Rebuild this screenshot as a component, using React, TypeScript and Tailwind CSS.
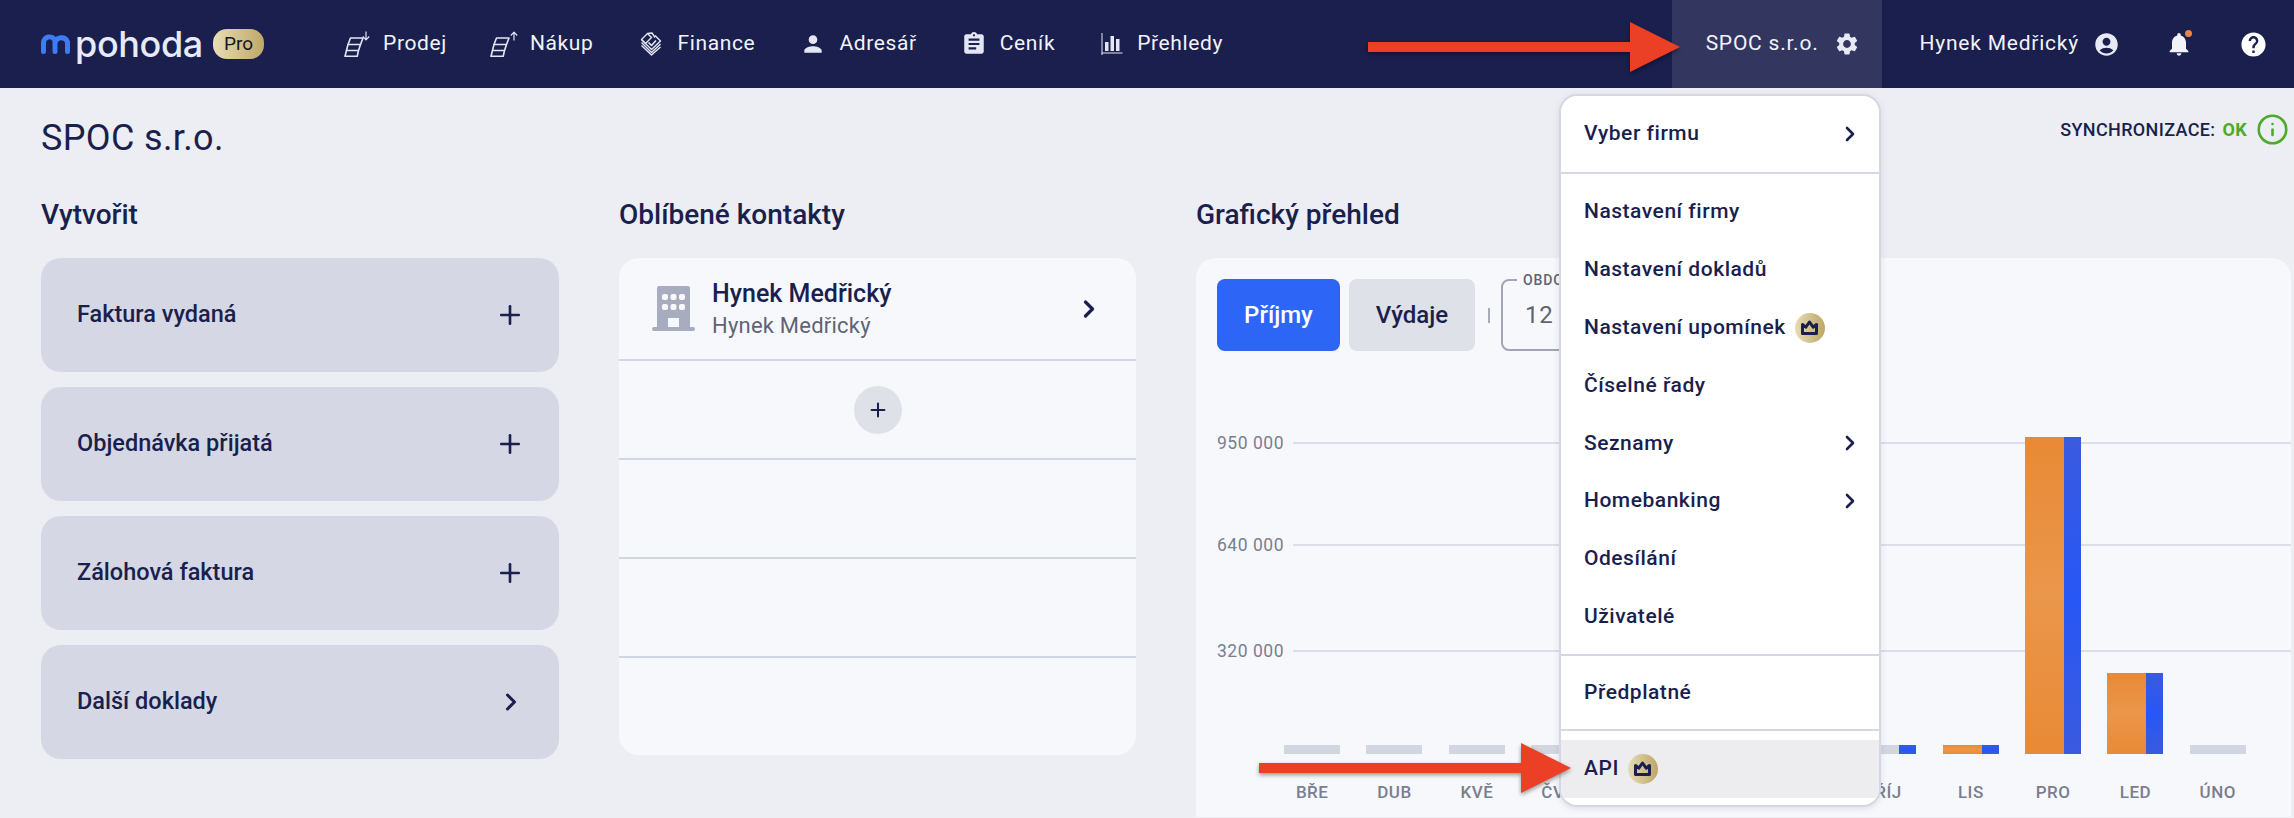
import { ChevronRight, Info, Plus } from "lucide-react";
import {
  MdAccountCircle,
  MdAssignment,
  MdHelp,
  MdNotifications,
  MdPerson,
  MdSettings,
} from "react-icons/md";

const StackIcon = ({ up }: { up?: boolean }) => (
  <svg width="28" height="26" viewBox="0 0 28 26" fill="none" stroke="#e4e7f3" strokeWidth="1.6" strokeLinejoin="round">
    <path d="M6.5 7h12.5L16.5 13.5H4z" />
    <path d="M4 13.5 2.5 19.5h12L16.5 13.5" />
    <path d="M2.5 19.5 1 25.3h12.2L14.5 19.5" />
    {up ? (
      <path d="M24 9.5V1.5M20.8 4.5 24 1.2l3.2 3.3" strokeWidth="1.2" />
    ) : (
      <path d="M22 .5v8M18.8 5.5 22 8.8l3.2-3.3" strokeWidth="1.2" />
    )}
  </svg>
);

const FinanceIcon = () => (
  <svg width="22" height="24" viewBox="0 0 22 24" fill="none" stroke="#e4e7f3" strokeWidth="1.4" strokeLinejoin="round">
    <path d="M7.5 1.5 1.5 7.5l4 4 6-6z" />
    <path d="M7.5 1.5 12 1l3 4.5" />
    <path d="M1.5 10.5 11.5 20.5 20.5 12" />
    <path d="M1.5 13.5 11.5 23 20.5 15" />
    <path d="M1.5 7.5 11.5 17.5 20.5 9 15 3.5" />
    <path d="M8.5 10.5 11.5 13.5 16 8.5" strokeWidth="1.7" />
  </svg>
);

const ChartIcon = () => (
  <svg width="22" height="22" viewBox="0 0 22 22" fill="#e4e7f3">
    <rect x="0.5" y="0" width="1" height="22" />
    <rect x="0.5" y="19.5" width="21" height="1" />
    <rect x="4" y="9" width="3.5" height="9" />
    <rect x="9.5" y="3" width="3.5" height="15" />
    <rect x="15" y="6" width="3.5" height="12" />
  </svg>
);

const Crown = () => (
  <span className="flex size-[30px] items-center justify-center rounded-full bg-gradient-to-r from-[#e6dcb4] to-[#bda766]">
    <svg width="19" height="17" viewBox="0 0 19 17" fill="none" stroke="#1a1f4e" strokeWidth="3" strokeLinejoin="round">
      <path d="M2.5 5.5 5.8 8.2 9.5 3l3.7 5.2 3.3-2.7V14.5h-14z" />
    </svg>
  </span>
);

const Building = () => (
  <svg width="43" height="45" viewBox="0 0 43 45" fill="#a7adbe">
    <rect x="5" y="0" width="33" height="44" rx="2" />
    <rect x="0" y="41" width="43" height="4" rx="2" />
    <g fill="#f7f8fc">
      <rect x="10" y="8" width="6" height="6" rx="2" />
      <rect x="18.5" y="8" width="6" height="6" rx="2" />
      <rect x="27" y="8" width="6" height="6" rx="2" />
      <rect x="10" y="18" width="6" height="6" rx="2" />
      <rect x="18.5" y="18" width="6" height="6" rx="2" />
      <rect x="27" y="18" width="6" height="6" rx="2" />
      <rect x="16" y="32" width="11" height="9" />
    </g>
  </svg>
);

const Arrow = ({ className, length }: { className: string; length: number }) => (
  <svg
    className={`absolute drop-shadow-[0_2px_2px_rgba(0,0,0,0.4)] ${className}`}
    width={length}
    height="50"
    viewBox={`0 0 ${length} 50`}
    fill="#ec4026"
  >
    <path d={`M0 20h${length - 50}V0l50 25-50 25V30H0z`} />
  </svg>
);

const navItems = [
  { label: "Prodej", icon: <StackIcon />, cls: "gap-[11px]" },
  { label: "Nákup", icon: <StackIcon up />, cls: "ml-[43px] gap-[12px]" },
  { label: "Finance", icon: <FinanceIcon />, cls: "ml-[46px] gap-[16px]" },
  { label: "Adresář", icon: <MdPerson className="size-[26px] text-[#e4e7f3]" />, cls: "ml-[45px] gap-[13px]" },
  { label: "Ceník", icon: <MdAssignment className="size-[26px] text-[#e4e7f3]" />, cls: "ml-[44px] gap-[13px]" },
  { label: "Přehledy", icon: <ChartIcon />, cls: "ml-[46px] gap-[14px]" },
];

const Header = () => (
  <header className="flex h-[88px] items-center bg-[#1a1f4e] pl-[41px] text-[21px] tracking-[0.03em] text-[#f2f3f9]">
    <div className="flex w-[303px] items-center">
      <svg width="31" height="20" viewBox="0 0 31 20" fill="none" stroke="#3b7cf8" strokeWidth="5" strokeLinecap="round">
        <path d="M2.5 17.5V9a6 6 0 0 1 11.5-2.5v11M14 9a6.5 6.5 0 0 1 12.5-1v9.5" />
      </svg>
      <span className="ml-[3px] font-[Inter,sans-serif] text-[36px] leading-none font-medium tracking-[-0.01em] text-[#e6ebfa]">
        pohoda
      </span>
      <span className="ml-[10px] flex h-[30px] w-[51px] items-center justify-center rounded-[14px] bg-gradient-to-r from-[#e8deb4] to-[#bfa866] text-[19px] tracking-normal text-[#15162a]">
        Pro
      </span>
    </div>
    <nav className="flex items-center">
      {navItems.map((item) => (
        <div key={item.label} className={`flex items-center ${item.cls}`}>
          {item.icon}
          <span>{item.label}</span>
        </div>
      ))}
    </nav>
    <div className="ml-auto flex h-full items-center tracking-[0.037em]">
      <div className="flex h-full w-[210px] items-center justify-end gap-[15px] bg-[#33365f] pr-[22px]">
        <span>SPOC s.r.o.</span>
        <MdSettings className="size-[26px] text-[#e8eaf3]" />
      </div>
      <div className="ml-[38px] flex items-center gap-[14px]">
        <span>Hynek Medřický</span>
        <MdAccountCircle className="size-[27px] text-[#e8eaf3]" />
      </div>
      <div className="relative ml-[45px]">
        <MdNotifications className="size-[28px] text-[#f2f3f9]" />
        <span className="absolute top-[0px] right-[1px] size-[7px] rounded-full bg-[#e8834a]" />
      </div>
      <MdHelp className="mr-[26px] ml-[46px] size-[29px] text-white" />
    </div>
  </header>
);

const createItems = ["Faktura vydaná", "Objednávka přijatá", "Zálohová faktura", "Další doklady"];

const CreateColumn = () => (
  <section className="w-[518px]">
    <h2 className="mb-[28px] h-[32px] text-[28px] leading-[34px] font-medium">Vytvořit</h2>
    <div className="flex flex-col gap-[15px]">
      {createItems.map((label, i) => (
        <div key={label} className="flex h-[114px] items-center justify-between rounded-[20px] bg-[#d5d8e4] pr-[34px] pl-[36px] text-[23.5px] font-medium">
          <span>{label}</span>
          {i < 3 ? <Plus className="size-[30px]" strokeWidth={2.1} /> : <ChevronRight className="size-[28px]" strokeWidth={2.6} />}
        </div>
      ))}
    </div>
  </section>
);

const FavouritesColumn = () => (
  <section className="w-[517px]">
    <h2 className="mb-[28px] h-[32px] text-[28px] leading-[34px] font-medium">Oblíbené kontakty</h2>
    <div className="h-[497px] rounded-[20px] bg-[#f7f8fc]">
      <div className="flex h-[103px] items-center border-b-2 border-[#d2d6e1] pr-[33px] pl-[33px]">
        <Building />
        <div className="ml-[17px] flex-1">
          <div className="text-[25px] leading-[33px] font-medium">Hynek Medřický</div>
          <div className="text-[22px] leading-[31px] tracking-[0.01em] text-[#5f6374]">Hynek Medřický</div>
        </div>
        <ChevronRight className="size-[28px]" strokeWidth={2.8} />
      </div>
      <div className="flex h-[99px] items-center justify-center border-b-2 border-[#d2d6e1]">
        <span className="flex size-[48px] items-center justify-center rounded-full bg-[#dfe1e9]">
          <Plus className="size-[22px]" strokeWidth={2.2} />
        </span>
      </div>
      <div className="h-[99px] border-b-2 border-[#d2d6e1]" />
      <div className="h-[99px] border-b-2 border-[#d2d6e1]" />
    </div>
  </section>
);

const months = [
  { m: "BŘE", h: 9 },
  { m: "DUB", h: 9 },
  { m: "KVĚ", h: 9 },
  { m: "ČVN", h: 9 },
  { m: "ČVC", h: 9 },
  { m: "SRP", h: 9 },
  { m: "ZÁŘ", h: 9 },
  { m: "ŘÍJ", h: 9, blue: true },
  { m: "LIS", h: 9, orange: true, blue: true },
  { m: "PRO", h: 317, orange: true, blue: true },
  { m: "LED", h: 81, orange: true, blue: true },
  { m: "ÚNO", h: 9 },
];

const gridRows = [
  { label: "950 000", cls: "mt-[81px]" },
  { label: "640 000", cls: "mt-[82px]" },
  { label: "320 000", cls: "mt-[86px]" },
];

const ChartColumn = () => (
  <section className="flex-1">
    <h2 className="mb-[28px] h-[32px] text-[28px] leading-[34px] font-medium">Grafický přehled</h2>
    <div className="h-[559px] rounded-tl-[20px] rounded-tr-[20px] bg-[#f7f8fc] pt-[21px] pl-[21px]">
      <div className="flex h-[72px] items-center">
        <button className="h-full w-[123px] rounded-[8px] bg-[#2d66f7] text-[24px] font-medium text-white">Příjmy</button>
        <button className="ml-[9px] h-full w-[126px] rounded-[8px] bg-[#dfe1e9] text-[24px] font-medium">Výdaje</button>
        <span className="ml-[13px] h-[15px] w-[2px] bg-[#a6abbc]" />
        <div className="relative ml-[11px] flex h-full w-[240px] items-center rounded-[8px] border-2 border-[#a0a5b8] pl-[22px] text-[24px] tracking-[0.03em] text-[#5f6374]">
          12 měsíců
          <span className="absolute -top-[9px] left-[14px] bg-[#f7f8fc] px-[6px] text-[14px] leading-[16px] font-medium tracking-[0.06em] text-[#5f6374]">
            OBDOBÍ
          </span>
        </div>
      </div>
      <div className="relative pt-px">
        {gridRows.map((row) => (
          <div key={row.label} className={`flex h-[20px] items-center gap-[8px] ${row.cls}`}>
            <span className="w-[68px] text-[17.5px] tracking-[0.03em] whitespace-nowrap text-[#7a7e8f]">{row.label}</span>
            <span className="h-[2px] flex-1 bg-[#dcdfe9]" />
          </div>
        ))}
        <div className="absolute top-[86px] left-[54px] grid w-[988px] grid-cols-12">
          {months.map((b) => (
            <div key={b.m} className="flex flex-col items-center">
              <div className="flex h-[317px] items-end">
                <div className="w-[39px] bg-gradient-to-b from-[#e88a35] via-[#ea964b] to-[#e88a35]" style={{ height: b.h, background: b.orange ? undefined : "#d2d6e1" }} />
                <div className="w-[17px] bg-gradient-to-b from-[#3a5ade] via-[#2757f5] to-[#3a5ade]" style={{ height: b.h, background: b.blue ? undefined : "#d2d6e1" }} />
              </div>
              <span className="mt-[28px] text-[17px] leading-[20px] font-medium tracking-[0.03em] text-[#7a7e8f]">{b.m}</span>
            </div>
          ))}
        </div>
      </div>
    </div>
  </section>
);

const MenuRow = ({ label, chevron, crown }: { label: string; chevron?: boolean; crown?: boolean }) => (
  <div className="flex h-[57.8px] items-center justify-between pr-[17px] pl-[23px]">
    <span className="flex items-center gap-[9px]">
      {label}
      {crown && <Crown />}
    </span>
    {chevron && <ChevronRight className="size-[24px]" strokeWidth={2.6} />}
  </div>
);

const Menu = () => (
  <div className="absolute top-[94px] left-[1559px] h-[713px] w-[322px] overflow-hidden rounded-[18px] border-2 border-[#d5d8e4] bg-white text-[21px] font-medium tracking-[0.025em] shadow-[0_2px_6px_rgba(60,65,100,0.12)]">
    <div className="pt-[9px]">
      <MenuRow label="Vyber firmu" chevron />
    </div>
    <div className="mt-[9.5px] border-t-2 border-[#d5d8e4] pt-[9px]">
      <MenuRow label="Nastavení firmy" />
      <MenuRow label="Nastavení dokladů" />
      <MenuRow label="Nastavení upomínek" crown />
      <MenuRow label="Číselné řady" />
      <MenuRow label="Seznamy" chevron />
      <MenuRow label="Homebanking" chevron />
      <MenuRow label="Odesílání" />
      <MenuRow label="Uživatelé" />
    </div>
    <div className="mt-[8px] border-t-2 border-[#d5d8e4] pt-[8px]">
      <MenuRow label="Předplatné" />
    </div>
    <div className="mt-[7.5px] border-t-2 border-[#d5d8e4] pt-[9px]">
      <div className="bg-[#ededf0]">
        <MenuRow label="API" crown />
      </div>
    </div>
  </div>
);

export default function App() {
  return (
    <div className="relative h-[818px] w-[2294px] overflow-hidden bg-[#eceef3] font-[Roboto,sans-serif] text-[#1a1f4e]">
      <Header />
      <main className="pr-[3px] pl-[41px]">
        <div className="mt-[25px] mb-[35px] flex items-start justify-between pr-[2px]">
          <h1 className="text-[36px] leading-[50px] tracking-[0.01em]">SPOC s.r.o.</h1>
          <div className="flex h-[32px] items-center text-[18px] font-medium tracking-[0.02em]">
            SYNCHRONIZACE:
            <span className="ml-[7px] font-bold text-[#4fa92c]">OK</span>
            <Info className="ml-[9px] size-[33px] text-[#4fa92c]" strokeWidth={1.9} />
          </div>
        </div>
        <div className="flex gap-[60px]">
          <CreateColumn />
          <FavouritesColumn />
          <ChartColumn />
        </div>
      </main>
      <Menu />
      <Arrow className="top-[22px] left-[1368px]" length={312} />
      <Arrow className="top-[743px] left-[1259px]" length={312} />
    </div>
  );
}
